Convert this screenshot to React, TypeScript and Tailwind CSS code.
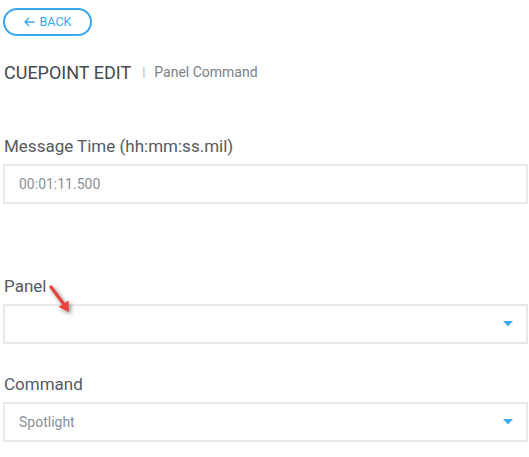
import React from "react";

const Caret = () => (
  <svg width="10" height="6" viewBox="0 0 10 6" className="shrink-0">
    <path d="M0 0 L10 0 L5 5.5 Z" fill="#3fa9f5" />
  </svg>
);

const Label = ({ children }: { children: React.ReactNode }) => (
  <div className="pl-[1px] text-[17px] leading-[20px] text-[#555a5f] mb-[8px]">{children}</div>
);

const Box = ({ value, select }: { value?: string; select?: boolean }) => (
  <div className="h-10 border-2 border-[#e6eaed] bg-white flex items-center justify-between pl-[14px] pr-[13px]">
    <span className="text-[14px] text-[#8a8f94]">{value}</span>
    {select && <Caret />}
  </div>
);

export default function App() {
  return (
    <div
      className="relative w-[529px] h-[457px] bg-white pl-[3px] pr-[1px] pt-[8px]"
      style={{ fontFamily: "Roboto, 'Liberation Sans', sans-serif" }}
    >
      <button className="w-[89px] h-[28px] rounded-full border-2 border-[#3aa8ef] flex items-center justify-center gap-[5px] text-[#3aa8ef] text-[12.5px] leading-none">
        <svg width="11" height="10" viewBox="0 0 11 10" fill="none" stroke="#3aa8ef" strokeWidth="1.3">
          <path d="M10.5 5 H1 M5 1 L1 5 L5 9" />
        </svg>
        <span>BACK</span>
      </button>

      <div className="flex items-center mt-[25px] pl-[1px] h-[22px]">
        <span className="text-[18px] text-[#45494d]">CUEPOINT EDIT</span>
        <span className="ml-[11px] mr-[9px] text-[13px] text-[#b0b4b8]">|</span>
        <span className="text-[14px] text-[#7b8085]">Panel Command</span>
      </div>

      <div className="mt-[53px]">
        <Label>Message Time (hh:mm:ss.mil)</Label>
        <Box value="00:01:11.500" />
      </div>

      <div className="mt-[72px]">
        <Label>Panel</Label>
        <Box select />
      </div>

      <div className="mt-[30px]">
        <Label>Command</Label>
        <Box value="Spotlight" select />
      </div>

      <svg
        className="absolute left-[44px] top-[282px]"
        width="34"
        height="36"
        viewBox="0 0 34 36"
        style={{ filter: "drop-shadow(2px 2px 2px rgba(0,0,0,0.45))" }}
      >
        <line x1="7" y1="5" x2="19.5" y2="21.7" stroke="#e8443a" strokeWidth="3.2" strokeLinecap="round" />
        <path d="M25 30 L24.5 18.4 L14.5 25 Z" fill="#e8443a" />
      </svg>
    </div>
  );
}
